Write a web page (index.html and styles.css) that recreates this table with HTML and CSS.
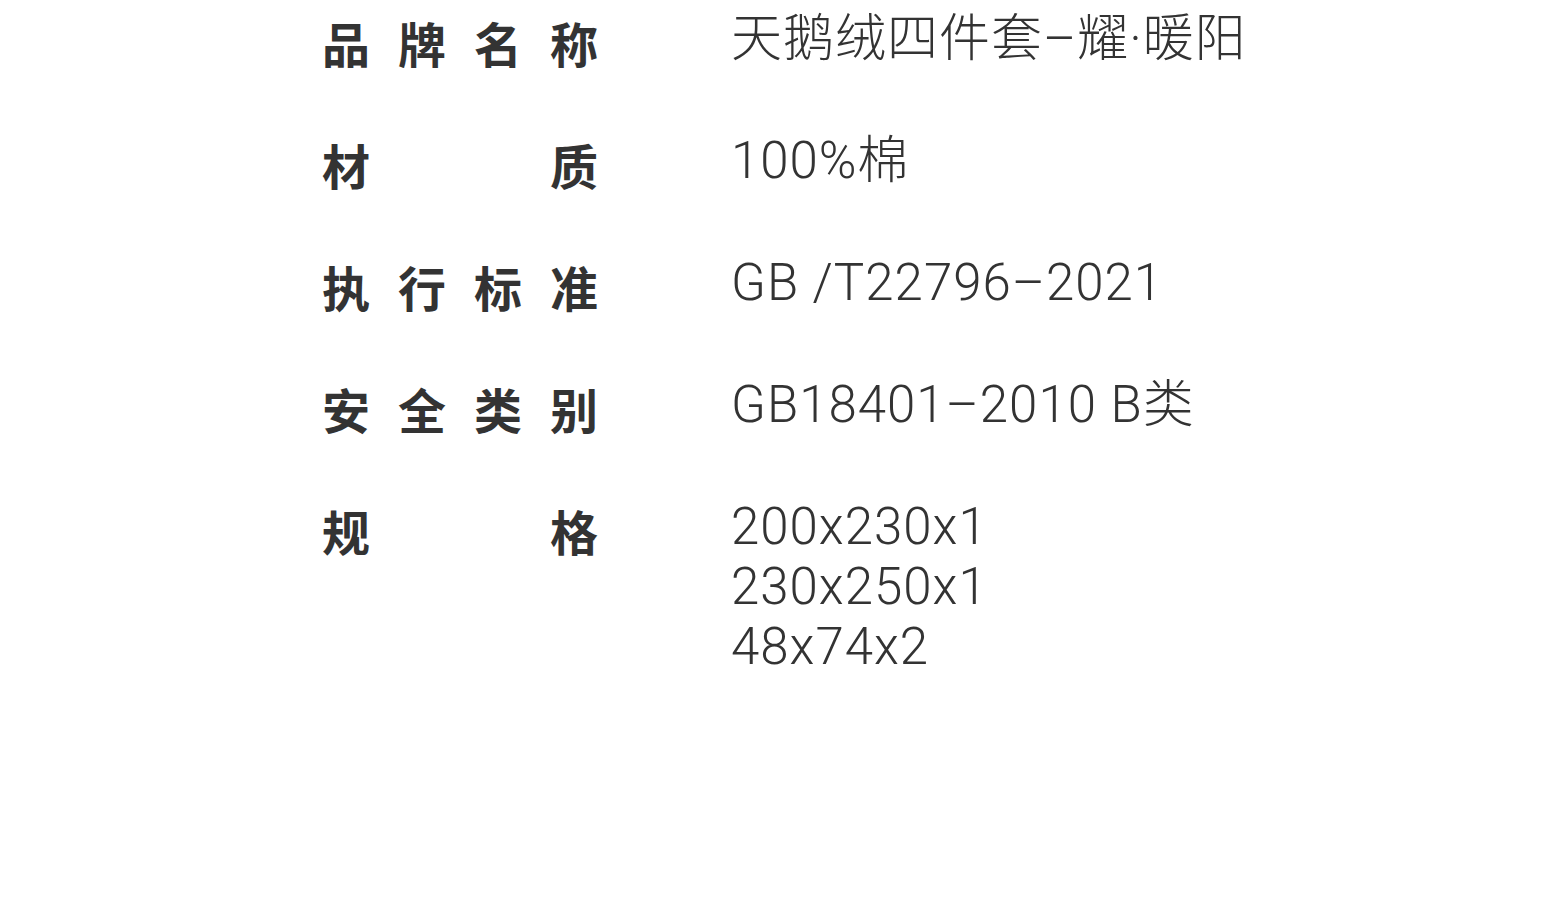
FILE: index.html
```html
<!DOCTYPE html>
<html lang="zh-CN">
<head>
    <meta charset="UTF-8">
    <title>产品参数</title>
    <link rel="stylesheet" href="styles.css">
</head>
<body>
    <div class="spec-list">
        <div class="spec-label">品牌名称</div>
        <div class="spec-value">天鹅绒四件套–耀·暖阳</div>

        <div class="spec-label">材质</div>
        <div class="spec-value">100%棉</div>

        <div class="spec-label">执行标准</div>
        <div class="spec-value">GB /T22796–2021</div>

        <div class="spec-label">安全类别</div>
        <div class="spec-value">GB18401–2010 B类</div>

        <div class="spec-label">规格</div>
        <div class="spec-value">
            200x230x1<br>
            230x250x1<br>
            48x74x2
        </div>
    </div>
</body>
</html>
```

FILE: styles.css
```css
body {
    margin: 0;
    background: #fff;
    color: #333;
    font-family: "Noto Sans CJK SC", "Noto Sans", sans-serif;
}
.spec-list {
    width: 916px;
    margin: 0 auto;
    padding-top: 12px;
    display: grid;
    grid-template-columns: 276px 1fr;
    column-gap: 133px;
    row-gap: 62px;
    align-items: start;
}
.spec-label {
    font-size: 48px;
    font-weight: 700;
    line-height: 60px;
    text-align: justify;
    text-align-last: justify;
}
.spec-value {
    font-family: Roboto, "Noto Sans CJK SC", sans-serif;
    font-size: 51px;
    font-weight: 300;
    line-height: 60px;
    letter-spacing: 1px;
    margin-top: -3px;
    white-space: nowrap;
}
```
